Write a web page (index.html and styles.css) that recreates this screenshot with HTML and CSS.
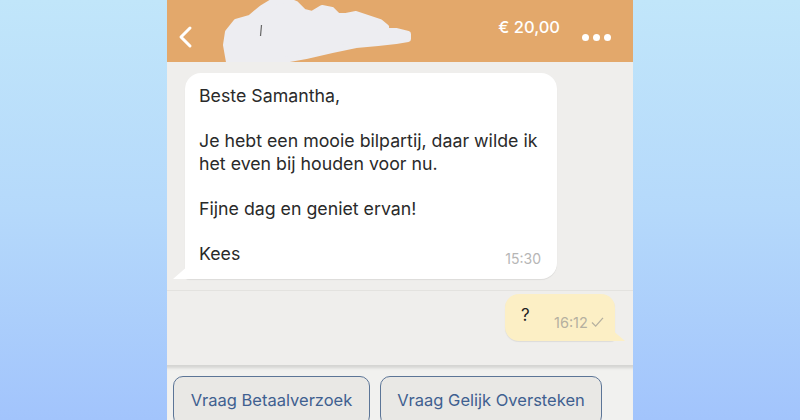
FILE: index.html
```html
<!DOCTYPE html>
<html lang="nl">
<head>
<meta charset="utf-8">
<link rel="stylesheet" href="styles.css">
</head>
<body>
<div class="phone">
  <header class="topbar">
    <svg class="back" viewBox="0 0 16 24" width="16" height="24"><polyline points="13,3 4,12 13,21" fill="none" stroke="#fff" stroke-width="3" stroke-linecap="round" stroke-linejoin="round"/></svg>
    <svg class="scribble" viewBox="167 0 465 62" width="465" height="62"><path d="M229 62 L226 45 L228 32 L236 22 L250 18 L262 8 L272 2 L286 0 L296 4 L304 12 L312 14 L322 8 L332 10 L338 16 L346 16 L356 14 L368 18 L380 22 L386 27 L380 31 L396 31 L408 34 L408 39 L396 41 L378 43 L356 45 L332 50 L306 56 L284 60 L268 62 Z" fill="#ededf1" stroke="#ededf1" stroke-width="6" stroke-linejoin="round"/><path d="M260.5 36 L261.5 25" stroke="#666" stroke-width="1.2"/></svg>
    <div class="spacer"></div>
    <span class="amount">€ 20,00</span>
    <span class="dots"><i></i><i></i><i></i></span>
  </header>
  <main class="chat">
    <div class="bubble in">
      <p>Beste Samantha,</p>
      <p>Je hebt een mooie bilpartij, daar wilde ik het even bij houden voor nu.</p>
      <p>Fijne dag en geniet ervan!</p>
      <p>Kees</p>
      <span class="time">15:30</span>
    </div>
    <div class="divider"></div>
    <div class="row-out">
      <div class="bubble out">
        <span class="q">?</span>
        <span class="time">16:12 <svg viewBox="0 0 14 12" width="13" height="11"><polyline points="1,6 5,10 13,1" fill="none" stroke="#b5b0a0" stroke-width="1.4"/></svg></span>
      </div>
    </div>
  </main>
  <footer class="actions">
    <button class="btn b1">Vraag Betaalverzoek</button>
    <button class="btn b2">Vraag Gelijk Oversteken</button>
  </footer>
</div>
</body>
</html>
```
FILE: styles.css
```css
* { box-sizing: border-box; }
html, body { margin: 0; height: 420px; overflow: hidden; }
body {
  background: linear-gradient(180deg, #c1e6fa 0%, #b5d9fb 50%, #a2c4fc 100%);
  font-family: Inter, Roboto, "Liberation Sans", sans-serif;
  display: flex;
  justify-content: center;
}
.phone {
  width: 466px;
  height: 420px;
  display: flex;
  flex-direction: column;
  background: #efeeec;
}
.topbar {
  position: relative;
  height: 62px;
  flex: none;
  background: #e3a86b;
  display: flex;
  align-items: center;
  padding: 0 22px 0 10px;
  color: #fff;
}
.back { margin-top: 12px; }
.scribble { position: absolute; left: 0; top: 0; }
.spacer { flex: 1; }
.amount { font-size: 16.5px; font-weight: 500; margin-top: -8px; }
.dots { display: flex; gap: 4px; margin-left: 22px; margin-top: 12px; }
.dots i { width: 7px; height: 7px; border-radius: 50%; background: #fff; display: block; }
.chat {
  flex: 1;
  display: flex;
  flex-direction: column;
  padding-top: 11px;
}
.bubble.in {
  position: relative;
  margin-left: 18px;
  width: 372px;
  background: #fff;
  border-radius: 16px 16px 16px 4px;
  padding: 12px 14px 14px 14px;
  color: #2a2a2a;
  font-size: 17.75px;
  line-height: 22.5px;
  box-shadow: 0 1px 1px rgba(0,0,0,0.08);
}
.bubble.in::before {
  content: "";
  position: absolute;
  left: -12px;
  bottom: 0;
  width: 16px;
  height: 14px;
  background: #fff;
  clip-path: polygon(100% 0, 100% 100%, 0 100%);
}
.bubble.in p { margin: 0 0 22.5px; }
.bubble.in p:nth-of-type(4) { margin-bottom: 0; }
.bubble.in .time {
  position: absolute;
  right: 16px;
  bottom: 9px;
  font-size: 14px;
  color: #b6b6b6;
}
.divider {
  height: 1px;
  background: #e3e2df;
  margin-top: 11px;
}
.row-out { display: flex; justify-content: flex-end; padding-right: 18px; margin-top: 3px; }
.bubble.out {
  position: relative;
  width: 110px;
  height: 47px;
  background: #fcefc5;
  border-radius: 14px 14px 4px 14px;
  box-shadow: 0 1px 1px rgba(0,0,0,0.08);
  color: #222;
}
.bubble.out::after {
  content: "";
  position: absolute;
  right: -10px;
  bottom: 0;
  width: 14px;
  height: 12px;
  background: #fcefc5;
  clip-path: polygon(0 0, 100% 100%, 0 100%);
}
.bubble.out .q { position: absolute; left: 16px; top: 11px; font-size: 17px; }
.bubble.out .time {
  position: absolute;
  left: 49px;
  top: 20px;
  font-size: 14.5px;
  color: #b5b0a0;
  display: flex;
  align-items: center;
  gap: 3px;
}
.actions {
  flex: none;
  height: 55px;
  background: #f1f1ef;
  box-shadow: inset 0 5px 3px -2px rgba(0,0,0,0.12);
  display: flex;
  gap: 10px;
  padding: 11px 0 0 6px;
  align-items: flex-start;
}
.btn {
  height: 50px;
  border: 1.5px solid #5c7597;
  border-radius: 10px;
  background: #e9e8e5;
  color: #3f6090;
  font-family: Inter, Roboto, "Liberation Sans", sans-serif;
  font-size: 16.5px;
  padding: 0 0 2px;
}
.b1 { width: 197px; }
.b2 { width: 222px; }
```
